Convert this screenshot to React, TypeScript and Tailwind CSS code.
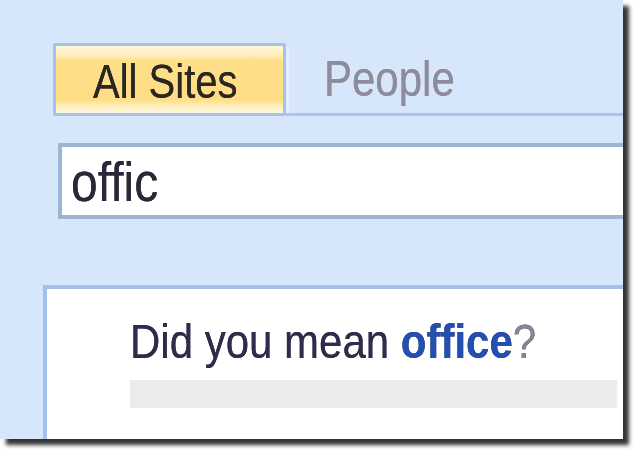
import React from "react";

export default function App() {
  const font = { fontFamily: '"Liberation Sans", Arial, sans-serif' };
  return (
    <div className="w-[640px] h-[456px] bg-white overflow-hidden" style={font}>
      <div className="w-[623px] h-[439px] bg-[#d6e7fc] shadow-[6px_6px_4px_rgba(0,0,0,0.8)] relative">
        <div className="w-full h-full overflow-hidden flex flex-col blur-[0.4px]">
          {/* Tabs */}
          <div className="flex mt-[43px] ml-[53px] h-[73px]">
            <div className="w-[233px] h-full border-[3px] border-[#a5c2ec] rounded-[2px] bg-[linear-gradient(to_bottom,#fff6d4_0%,#fff1c4_12%,#fedf8a_22%,#fedd84_80%,#fff0c0_90%,#fff7da_100%)] flex items-center pl-[37px] pt-[3px]">
              <span className="inline-block text-[40px] leading-none text-[#2a2622] scale-y-[1.2] [text-shadow:0_0_0.6px_#2a2622]">All Sites</span>
            </div>
            <div className="flex-1 h-full border-b-[3px] border-[#a9c5ee] flex items-center pl-[38px] pt-[3px] relative">
              <div className="absolute left-0 top-[3px] bottom-0 w-[3px] bg-[#e6eefb]" />
              <span className="inline-block text-[42px] leading-none text-[#8e8c9a] scale-y-[1.17] [text-shadow:0_0_0.6px_#8e8c9a]">People</span>
            </div>
          </div>
          {/* Search box */}
          <div className="mt-[27px] ml-[58px] w-[640px] h-[76px] border-[4px] border-[#9db5d3] bg-white flex items-center pl-[9px] pt-[4px] shrink-0">
            <span className="inline-block text-[48px] leading-none text-[#2a2838] scale-y-[1.15] [text-shadow:0_0_0.6px_#2a2838]">offic</span>
          </div>
          {/* Results panel */}
          <div className="mt-[66px] ml-[43px] w-[640px] flex-1 border-t-[4px] border-l-[4px] border-[#a4c1ec] bg-white pl-[83px]">
            <div className="mt-[32px] h-[42px]">
              <span className="inline-block text-[42px] leading-none text-[#2e2c4a] scale-y-[1.15] [text-shadow:0_0_0.6px_#2e2c4a]">
                Did you mean <b className="text-[#2350b0] font-bold">office</b>
                <span className="text-[#8a8496]">?</span>
              </span>
            </div>
            <div className="mt-[17px] h-[28px] w-[487px] bg-[#ebebeb]" />
          </div>
        </div>
      </div>
    </div>
  );
}
